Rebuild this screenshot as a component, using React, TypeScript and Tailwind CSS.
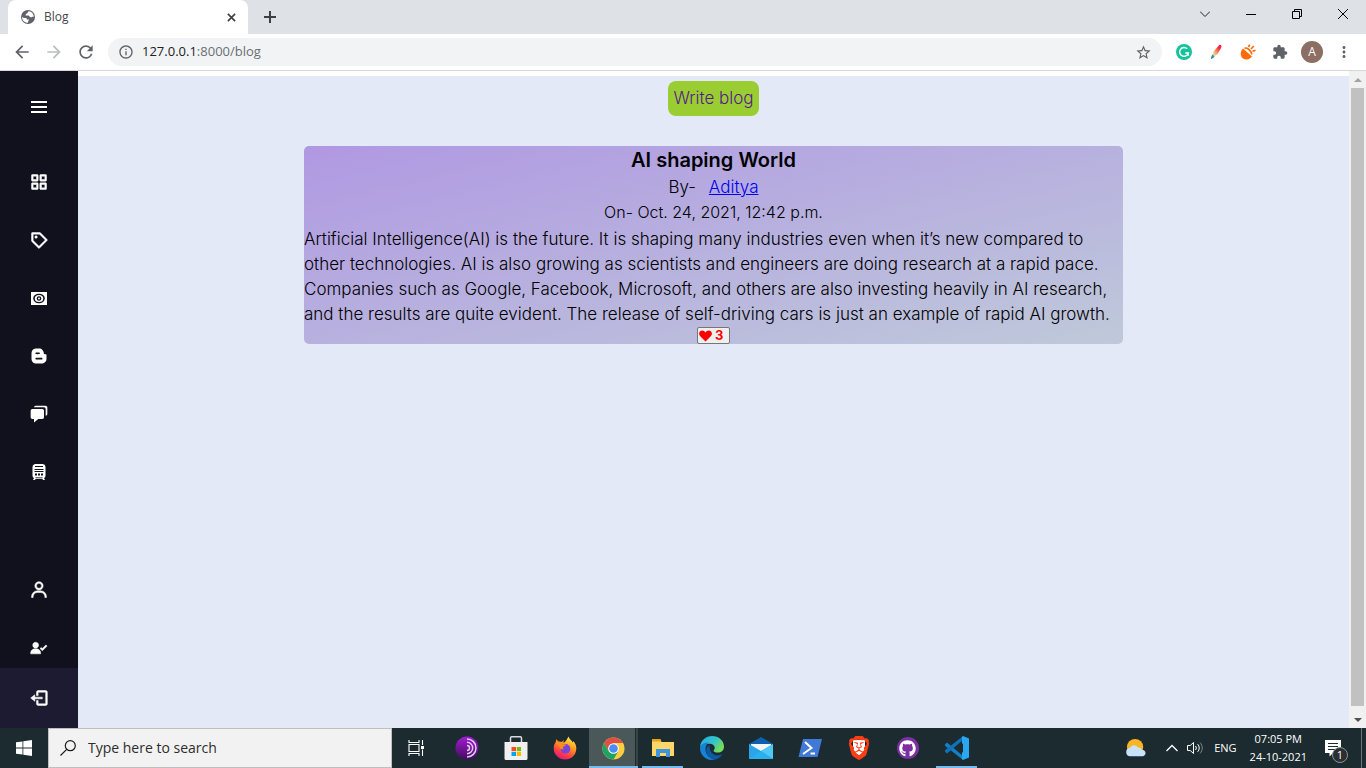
import type { ReactNode } from 'react'
import {
  BiGridAlt,
  BiLogOut,
  BiLogoBlogger,
  BiMenu,
  BiPurchaseTag,
  BiSolidChat,
  BiSolidUserCheck,
  BiUser,
} from 'react-icons/bi'
import { FaGithub } from 'react-icons/fa'
import { MdArrowBack, MdArrowForward, MdExtension, MdInfoOutline, MdMoreVert, MdRefresh, MdStarBorder } from 'react-icons/md'
import { SiBrave } from 'react-icons/si'

interface Post {
  title: string
  author: string
  date: string
  lines: string[]
  likes: number
}

const post: Post = {
  title: 'AI shaping World',
  author: 'Aditya',
  date: 'Oct. 24, 2021, 12:42 p.m.',
  lines: [
    'Artificial Intelligence(AI) is the future. It is shaping many industries even when it’s new compared to',
    'other technologies. AI is also growing as scientists and engineers are doing research at a rapid pace.',
    'Companies such as Google, Facebook, Microsoft, and others are also investing heavily in AI research,',
    'and the results are quite evident. The release of self-driving cars is just an example of rapid AI growth.',
  ],
  likes: 3,
}

function MoneyIcon() {
  return (
    <svg viewBox="0 0 16 13" className="w-4 h-[13px]">
      <rect width="16" height="13" fill="#fff" />
      <ellipse cx="8" cy="6.500" rx="5.800" ry="4.800" fill="#11101d" />
      <ellipse cx="8" cy="6.500" rx="4.200" ry="3.500" fill="#fff" />
      <circle cx="8" cy="6.500" r="2.300" fill="#11101d" />
      <circle cx="8" cy="6.500" r="1" fill="#fff" />
    </svg>
  )
}

function TrainIcon() {
  return (
    <svg viewBox="0 0 14 16" className="w-[14px] h-4">
      <path d="M3 0h8q2.500.3 2.500 3v8.500q0 2-1.500 2.500l1 2h-2l-.7-1.300H3.700L3 16H1l1-2Q.5 13.500.5 11.500V3Q.5.300 3 0z" fill="#fff" />
      <path d="M3 2.500h8M2.500 5.500h9M2.500 7.500h9" stroke="#11101d" strokeWidth="1" />
      <path d="M3 9.500h2v2H3zM9 9.500h2v2H9zM6 9.500h2v2H6z" fill="#11101d" />
      <path d="M3.500 13.500h7" stroke="#11101d" strokeWidth=".6" />
    </svg>
  )
}

function TabStrip() {
  return (
    <div className="h-[34px] bg-[#dee1e6] flex pl-2">
      <div className="w-60 h-[34px] bg-white rounded-t-lg flex items-center px-3 gap-2 text-[#45474a]">
        <svg viewBox="0 0 16 16" className="w-4 h-4 shrink-0">
          <circle cx="8" cy="8" r="7" fill="#5f6368" />
          <path d="M2 8.200c1.600 0 2.200.8 3.600.8 1 0 1.400.7 1.200 1.500l2.200.1c-.2 1.400-1 1.600-1.200 3.200C4.500 13.600 2 11.400 2 8.200zM8.600 2.200c-1.200 1-.6 2-2 2.200-.6.1-.4 1.300-1.300 1.500.3 1 2.500.2 3.600.8.8.4.9 1.700 2 1.600 1-.1 1.200-.7 2.900-.5 0-3-2.200-5.300-5.200-5.600z" fill="#fff" />
        </svg>
        <span className="text-xs grow">Blog</span>
        <button aria-label="Close tab">
          <svg viewBox="0 0 10 10" className="w-[9px] h-[9px]">
            <path d="M1 1l8 8M9 1L1 9" stroke="#3c4043" strokeWidth="1.800" />
          </svg>
        </button>
      </div>
      <button aria-label="New tab" className="h-[34px] px-4">
        <svg viewBox="0 0 12 12" className="w-3 h-3">
          <path d="M6 0v12M0 6h12" stroke="#3c4043" strokeWidth="2" />
        </svg>
      </button>
      <div className="ml-auto flex h-7">
        <button aria-label="Search tabs" className="w-[46px] flex items-center justify-center">
          <svg viewBox="0 0 10 6" className="w-[10px] h-[6px]"><path d="M0 .5l5 5 5-5" stroke="#222" fill="none" /></svg>
        </button>
        <button aria-label="Minimize" className="w-[46px] flex items-center justify-center">
          <svg viewBox="0 0 10 10" className="w-[10px] h-[10px]"><path d="M0 5.500h10" stroke="#000" /></svg>
        </button>
        <button aria-label="Restore" className="w-[46px] flex items-center justify-center">
          <svg viewBox="0 0 10 10" className="w-[10px] h-[10px]"><path d="M.5 2.500h7v7h-7zM2.500 2.500v-2h7v7h-2" stroke="#000" fill="none" /></svg>
        </button>
        <button aria-label="Close" className="w-[46px] flex items-center justify-center">
          <svg viewBox="0 0 10 10" className="w-[10px] h-[10px]"><path d="M0 0l10 10M10 0L0 10" stroke="#000" /></svg>
        </button>
      </div>
    </div>
  )
}

function Toolbar() {
  return (
    <div className="h-[37px] bg-white border-b border-[#d5d7da] flex items-center pl-3 pr-[13px] text-[#5f6368]">
      <button aria-label="Back" className="w-8"><MdArrowBack className="w-5 h-5" /></button>
      <button aria-label="Forward" className="w-8 text-[#bbbdbf]"><MdArrowForward className="w-5 h-5" /></button>
      <button aria-label="Reload" className="w-8"><MdRefresh className="w-5 h-5" /></button>
      <div className="grow h-7 rounded-full bg-[#f1f3f4] flex items-center px-[10px] gap-2">
        <MdInfoOutline className="w-4 h-4" />
        <a href="#blog" className="text-[13px] grow text-[#6b6f73]"><span className="text-[#202124]">127.0.0.1</span>:8000/blog</a>
        <button aria-label="Bookmark this tab"><MdStarBorder className="w-[17px] h-[17px]" /></button>
      </div>
      <div className="flex items-center ml-[14px] gap-4">
        <button aria-label="Grammarly">
          <svg viewBox="0 0 16 16" className="w-4 h-4">
            <circle cx="8" cy="8" r="8" fill="#15c39a" />
            <path d="M11.200 4.800A4.400 4.400 0 1 0 12.300 9H9.300M12.300 8.800v3" stroke="#fff" strokeWidth="1.400" fill="none" />
          </svg>
        </button>
        <button aria-label="Color picker">
          <svg viewBox="0 0 16 16" className="w-4 h-4">
            <defs>
              <linearGradient id="brush" x1="1" y1="0" x2="0" y2="1">
                <stop offset=".25" stopColor="#f9284f" />
                <stop offset=".5" stopColor="#fa9b4c" />
                <stop offset=".7" stopColor="#e8d9a6" />
                <stop offset=".8" stopColor="#3d97a6" />
                <stop offset="1" stopColor="#24649a" />
              </linearGradient>
            </defs>
            <path d="M11 1.200c1.800-1 3 .3 2.300 2.200L9.500 10l-2.300 1.800C6 14 4.500 14.500 3 15c.2-2 .2-3.200 1.600-4.600L6 7z" fill="url(#brush)" />
          </svg>
        </button>
        <button aria-label="Extension">
          <svg viewBox="0 0 16 16" className="w-4 h-4" fill="none">
            <path d="M3 4.500l9 8c-2.500 3.500-6.500 3.500-9 2S-.5 8 3 4.500z" fill="#ff6a0a" />
            <path d="M4.500 4.500c2-1.500 6.500 1.500 7.500 6" stroke="#ff6a0a" strokeWidth="1.600" />
            <path d="M8.500 3L9.700.7M11 5l2.800-3M12.500 7.300l3-1" stroke="#ff6a0a" strokeWidth="1.700" />
          </svg>
        </button>
        <button aria-label="Extensions"><MdExtension className="w-4 h-4" /></button>
      </div>
      <button aria-label="Profile" className="ml-[13px] w-[22px] h-[22px] rounded-full bg-[#8d6e63] text-white text-xs">A</button>
      <button aria-label="More" className="ml-3"><MdMoreVert className="w-[18px] h-[18px]" /></button>
    </div>
  )
}

function NavItem({ label, children }: { label: string; children: ReactNode }) {
  return (
    <li>
      <a href={`#${label}`} aria-label={label} className="h-[50px] flex items-center justify-center">
        {children}
      </a>
    </li>
  )
}

function Sidebar() {
  return (
    <nav className="w-[78px] shrink-0 bg-[#11101d] text-white flex flex-col">
      <button aria-label="Menu" className="h-[60px] mt-[6px] mb-5 flex items-center justify-center">
        <BiMenu className="w-6 h-6" />
      </button>
      <ul className="flex flex-col gap-2">
        <NavItem label="dashboard"><BiGridAlt strokeWidth="0.6" className="w-5 h-5" /></NavItem>
        <NavItem label="tags"><BiPurchaseTag strokeWidth="0.6" className="w-5 h-5" /></NavItem>
        <NavItem label="money"><MoneyIcon /></NavItem>
        <NavItem label="blog"><BiLogoBlogger className="w-5 h-5" /></NavItem>
        <NavItem label="chat"><BiSolidChat className="w-5 h-5" /></NavItem>
        <NavItem label="train"><TrainIcon /></NavItem>
      </ul>
      <ul className="flex flex-col gap-2 mt-auto">
        <NavItem label="user"><BiUser strokeWidth="0.6" className="w-5 h-5" /></NavItem>
        <NavItem label="account"><BiSolidUserCheck strokeWidth="0.6" className="w-5 h-5" /></NavItem>
      </ul>
      <button aria-label="Log out" className="h-[60px] -mt-[5px] bg-[#1d1b31] flex items-center justify-center">
        <BiLogOut strokeWidth="0.6" className="w-5 h-5" />
      </button>
    </nav>
  )
}

function BlogCard({ post }: { post: Post }) {
  return (
    <article className="w-[819px] max-w-full mt-[30px] rounded-[5px] bg-linear-to-br from-[#b098e2] to-[#bfc9da] text-black text-center text-[17px] leading-[25px]">
      <h3 className="text-xl leading-[29px] font-semibold">{post.title}</h3>
      <p>By- <a href="#author" className="ml-2 text-[#0000ee] underline">{post.author}</a></p>
      <p className="text-base leading-[25px]">On- {post.date}</p>
      <p className="text-left whitespace-nowrap pt-[2px]">
        {post.lines.map(line => (
          <span key={line} className="block">{line}</span>
        ))}
      </p>
      <div className="flex justify-center">
        <button className="h-[17px] w-[33px] bg-[#efefef] border border-[#767676] rounded-[2px] flex items-center pl-px gap-[3px] text-[#ff0000] text-[13px] font-bold">
          <svg viewBox="0 0 13 12" className="w-[13px] h-3">
            <path d="M6.500 11.500L1 6C-1 3.500.5.5 3.200.5c1.500 0 2.500.8 3.300 1.900C7.300 1.300 8.300.5 9.800.5 12.500.5 14 3.500 12 6z" fill="#f00" />
          </svg>
          {post.likes}
        </button>
      </div>
    </article>
  )
}

function Scrollbar() {
  return (
    <div className="w-[17px] shrink-0 bg-[#f1f1f1] flex flex-col items-center">
      <div className="h-[17px] flex items-center">
        <svg viewBox="0 0 8 4" className="w-2 h-1"><path d="M0 4l4-4 4 4z" fill="#a3a3a3" /></svg>
      </div>
      <div className="grow w-[13px] bg-[#c1c1c1] mb-[5px]" />
      <div className="h-[17px] flex items-center">
        <svg viewBox="0 0 8 4" className="w-2 h-1"><path d="M0 0l4 4 4-4z" fill="#505050" /></svg>
      </div>
    </div>
  )
}

function TaskButton({ label, state, children }: { label: string; state?: 'open' | 'active'; children: ReactNode }) {
  return (
    <button
      aria-label={label}
      className={`w-[49px] h-10 relative flex items-center justify-center ${state === 'active' ? 'bg-[#4a585a]' : ''}`}
    >
      {children}
      {state === 'active' && <span className="absolute right-0 inset-y-0 w-[3px] bg-[#354446] border-l border-[#1b2b2f]" />}
      {state && <span className={`absolute bottom-0 h-[2px] bg-[#76b9ed] ${state === 'active' ? 'inset-x-0' : 'inset-x-1'}`} />}
    </button>
  )
}

function Taskbar() {
  return (
    <footer className="h-10 bg-[#1b2b2f] text-white flex items-center">
      <button aria-label="Start" className="w-12 flex justify-center">
        <svg viewBox="0 0 16 16" className="w-4 h-4" fill="#fff">
          <path d="M0 2.300l6.500-.9v6.200H0zM7.300 1.200L16 0v7.600H7.300zM0 8.400h6.500v6.200L0 13.700zM7.300 8.400H16V16l-8.700-1.200z" />
        </svg>
      </button>
      <label className="w-[344px] h-10 bg-[#f2f2f2] border border-[#bfbfbf] flex items-center pl-[11px] gap-3">
        <svg viewBox="0 0 16 16" className="w-4 h-4 shrink-0" fill="none" stroke="#1a1a1a" strokeWidth="1.200">
          <circle cx="10.300" cy="5.700" r="5" />
          <path d="M6.700 9.300L.5 15.500" />
        </svg>
        <input
          type="text"
          aria-label="Search"
          placeholder="Type here to search"
          className="w-full bg-transparent outline-none text-sm placeholder:text-[#2d2d2d]"
        />
      </label>
      <TaskButton label="Task view">
        <svg viewBox="0 0 17 16" className="w-[17px] h-4" fill="none" stroke="#fff">
          <path d="M1 0v2.500h10V0M1 16v-2.500h10V16M1 4.500h10v7H1zM14.500 0v5M14.500 9.500V16" strokeWidth="1.100" />
          <path d="M13 6h3v3h-3z" fill="#fff" stroke="none" />
        </svg>
      </TaskButton>
      <div className="flex ml-px">
        <TaskButton label="Tor Browser">
          <svg viewBox="0 0 24 24" className="w-6 h-6" fill="none">
            <defs><linearGradient id="tor" x1="0" y1="0" x2="0" y2="1"><stop stopColor="#a31bd4" /><stop offset="1" stopColor="#420c5d" /></linearGradient></defs>
            <circle cx="12" cy="12" r="11.500" fill="url(#tor)" />
            <path d="M12 3a9 9 0 0 1 0 18M12 6.300a5.700 5.700 0 0 1 0 11.400M12 9.500a2.500 2.500 0 0 1 0 5" stroke="#e6c9f2" strokeWidth="1.500" />
          </svg>
        </TaskButton>
        <TaskButton label="Microsoft Store">
          <svg viewBox="0 0 24 24" className="w-6 h-6">
            <path d="M6.500 7V2Q6.500.8 7.700.8h8.600Q17.500.8 17.500 2v5" stroke="#d9dcdd" strokeWidth="1.500" fill="none" />
            <path d="M.5 6h23v16.500q0 1.500-1.500 1.500H2q-1.500 0-1.500-1.500z" fill="#f0f0f0" />
            <path d="M7.500 11H12v4.200H7.500z" fill="#f25022" />
            <path d="M12.700 11H17v4.200h-4.300z" fill="#7fba00" />
            <path d="M7.500 16H12v4H7.500z" fill="#00a4ef" />
            <path d="M12.700 16H17v4h-4.300z" fill="#ffb900" />
          </svg>
        </TaskButton>
        <TaskButton label="Firefox">
          <svg viewBox="0 0 24 24" className="w-6 h-6">
            <defs>
              <linearGradient id="fox" x1=".8" y1="0" x2=".3" y2="1"><stop stopColor="#fff44f" /><stop offset=".4" stopColor="#ff9a20" /><stop offset=".75" stopColor="#ff3b47" /><stop offset="1" stopColor="#e31587" /></linearGradient>
            </defs>
            <path d="M15.500.5c1 3.200 3.300 3.800 4.300 6 .3-.5.400-1 .3-1.500C22.500 7 23.500 10 23.300 13 22.800 19.500 18 23.500 12 23.500S.7 18.800.7 12.500c0-3.300 1-5.200 2.200-6.800l.2-2.500L5.500 5.500c1.200-.2 2.500 0 3.500.4L10.500 4v3c2-1 3.200-3.500 5-6.500z" fill="url(#fox)" />
            <circle cx="12.500" cy="12.800" r="4.800" fill="#7545dd" />
            <path d="M3.500 6.500c3-.6 5 0 6.500 1.700l3 .4c-.2 1.500-2.600 1.600-3 2.400-.5 1.200.2 1.800 1 2-2.200.8-4.500-.3-4.800-2.500z" fill="#ff8b18" />
          </svg>
        </TaskButton>
        <TaskButton label="Google Chrome" state="active">
          <svg viewBox="0 0 24 24" className="w-[23px] h-[23px]">
            <circle cx="12" cy="12" r="11.500" fill="#ffcd40" />
            <path d="M12 12L7 14.800 2 6.300a11.500 11.500 0 0 1 20 0H12z" fill="#dd5144" />
            <path d="M2 6.300A11.500 11.500 0 0 0 12 23.500l5-8.700-5-1-5 1z" fill="#1da462" />
            <circle cx="12" cy="12" r="5.600" fill="#fff" />
            <circle cx="12" cy="12" r="4.500" fill="#4b8bf4" />
          </svg>
        </TaskButton>
        <TaskButton label="File Explorer" state="open">
          <svg viewBox="0 0 24 24" className="w-6 h-6">
            <path d="M1 3.500h8L10.500 6H23v14H1z" fill="#ffd667" />
            <path d="M1 3h8.500l1 2.500H1z" fill="#e8a317" />
            <path d="M5 21v-8h14v8h-4v-4H9v4z" fill="#3b96de" />
          </svg>
        </TaskButton>
        <TaskButton label="Edge">
          <svg viewBox="0 0 24 24" className="w-6 h-6">
            <defs>
              <linearGradient id="edge" x1="0" y1="0" x2="1" y2=".5"><stop stopColor="#2ba8e5" /><stop offset=".6" stopColor="#33c4cb" /><stop offset="1" stopColor="#76dd5a" /></linearGradient>
            </defs>
            <path d="M0 11C.8 4 6 0 12 0c7 0 12 5 12 10.500 0 4-2.800 6-6.200 6-2.500 0-4.300-.8-4.300-1.800 0-.7 1.200-1.200 1.200-3 0-2.200-2-4-5-4C5 7.700 2 9 0 11z" fill="url(#edge)" />
            <path d="M0 12c.5-3.500 4-6 9-5.500-2 1-3.500 3.500-3.500 7C5.500 19 10 22.500 15 23.600 6 25.500 0 19 0 12z" fill="#1783d4" />
            <path d="M9.500 9C6 11 5 15 7.500 19c2.700 4.300 7.500 5.500 10.500 3.500 2-1.200 3.500-2.800 4.500-4.500-6 3-13.500.5-13-9z" fill="#0c59a4" />
          </svg>
        </TaskButton>
        <TaskButton label="Mail">
          <svg viewBox="0 0 24 24" className="w-6 h-6">
            <path d="M0 8L12 1l12 7v4H0z" fill="#0f5fb0" />
            <path d="M2 8h20v7H2z" fill="#f4f4f4" />
            <path d="M0 8l12 7 12-7v15H0z" fill="#2aa5ea" />
            <path d="M12 15l12-7v15z" fill="#50c8f5" />
            <path d="M0 23l12-8 12 8z" fill="#29b0ee" />
          </svg>
        </TaskButton>
        <TaskButton label="PowerShell">
          <svg viewBox="0 0 24 24" className="w-6 h-6">
            <path d="M5 3h19l-4.500 18H.5z" fill="#4179d6" />
            <path d="M7 6l6.500 6L5 18M12.500 17.500H17" stroke="#fff" strokeWidth="2" fill="none" />
          </svg>
        </TaskButton>
        <TaskButton label="Brave">
          <span className="bg-white w-3 h-4 absolute rounded-b-lg" />
          <SiBrave className="w-6 h-6 relative text-[#fb3d16]" />
        </TaskButton>
        <TaskButton label="GitHub Desktop">
          <span className="w-[22px] h-[22px] rounded-full bg-[#7b2fa0] flex items-center justify-center">
            <FaGithub className="w-[17px] h-[17px]" />
          </span>
        </TaskButton>
        <TaskButton label="VS Code" state="open">
          <svg viewBox="0 0 24 24" className="w-6 h-6">
            <path d="M0 8.300l2-1.700 16 13.500V24L0 9.800z" fill="#1180c9" />
            <path d="M0 15.700l2 1.700L18 4V0L0 14.200z" fill="#0f73b9" />
            <path d="M18 0l6 2.500v19L18 24l-1-1V1z" fill="#2aa7f1" />
            <path d="M18 7.200L11.500 12l6.500 4.800z" fill="#1b2b2f" />
          </svg>
        </TaskButton>
      </div>
      <div className="ml-auto flex items-center text-[11px]">
        <svg viewBox="0 0 22 20" className="w-5 h-5 mr-5">
          <circle cx="10" cy="9" r="9" fill="#fbb422" />
          <path d="M5 19a4.500 4.500 0 0 1-.5-9C6 6.500 11 6 13 9.500c3-.5 4 1 4 2.500 3 0 4.500 1.500 4.500 3.500S20 19 18 19z" fill="#c9e4fa" />
        </svg>
        <button aria-label="Show hidden icons" className="mr-[9px]">
          <svg viewBox="0 0 12 8" className="w-3 h-2"><path d="M.5 7L6 1.500 11.500 7" stroke="#fff" strokeWidth="1.300" fill="none" /></svg>
        </button>
        <button aria-label="Volume" className="mr-[10px]">
          <svg viewBox="0 0 17 14" className="w-[17px] h-[14px]" fill="none" stroke="#fff">
            <path d="M.5 4.500h2.700L6.500 1.500v11L3.200 9.500H.5z" />
            <path d="M8.500 5c1 1.300 1 2.700 0 4M10.700 3.200c2 2.300 2 5.300 0 7.600" />
            <path d="M13 1.500c3 3.300 3 7.700 0 11" stroke="#7d888a" />
          </svg>
        </button>
        <span className="mr-[13px]">ENG</span>
        <div className="text-center leading-[18px] mr-[17px]">
          <div>07:05 PM</div>
          <div>24-10-2021</div>
        </div>
        <button aria-label="Notifications" className="relative mr-[13px]">
          <svg viewBox="0 0 24 24" className="w-6 h-6">
            <path d="M1 4h16v13H9l-3.500 3.500V17H1z" fill="#fff" />
            <path d="M4 7.500h10M4 10.500h10M4 13.500h7" stroke="#1b2b2f" />
          </svg>
          <span className="absolute left-2 top-[11px] w-4 h-4 rounded-full bg-[#2b2f31] border border-[#8b9294] text-[11px] leading-[14px]">1</span>
        </button>
        <div className="w-px h-10 bg-[#6b7678] mr-1" />
      </div>
    </footer>
  )
}

export default function App() {
  return (
    <div className="min-h-screen flex flex-col font-['Open_Sans',sans-serif]">
      <header>
        <TabStrip />
        <Toolbar />
      </header>
      <div className="grow flex bg-white">
        <Sidebar />
        <main className="grow mt-[5px] pt-[5px] bg-[#e4e9f7] flex flex-col items-center font-[Inter,sans-serif] font-light">
          <a href="#write" className="h-[35px] px-[5px] rounded-lg bg-[#9acd32] text-[#551a8b] text-[17px] flex items-center">Write blog</a>
          <BlogCard post={post} />
        </main>
        <Scrollbar />
      </div>
      <Taskbar />
    </div>
  )
}
